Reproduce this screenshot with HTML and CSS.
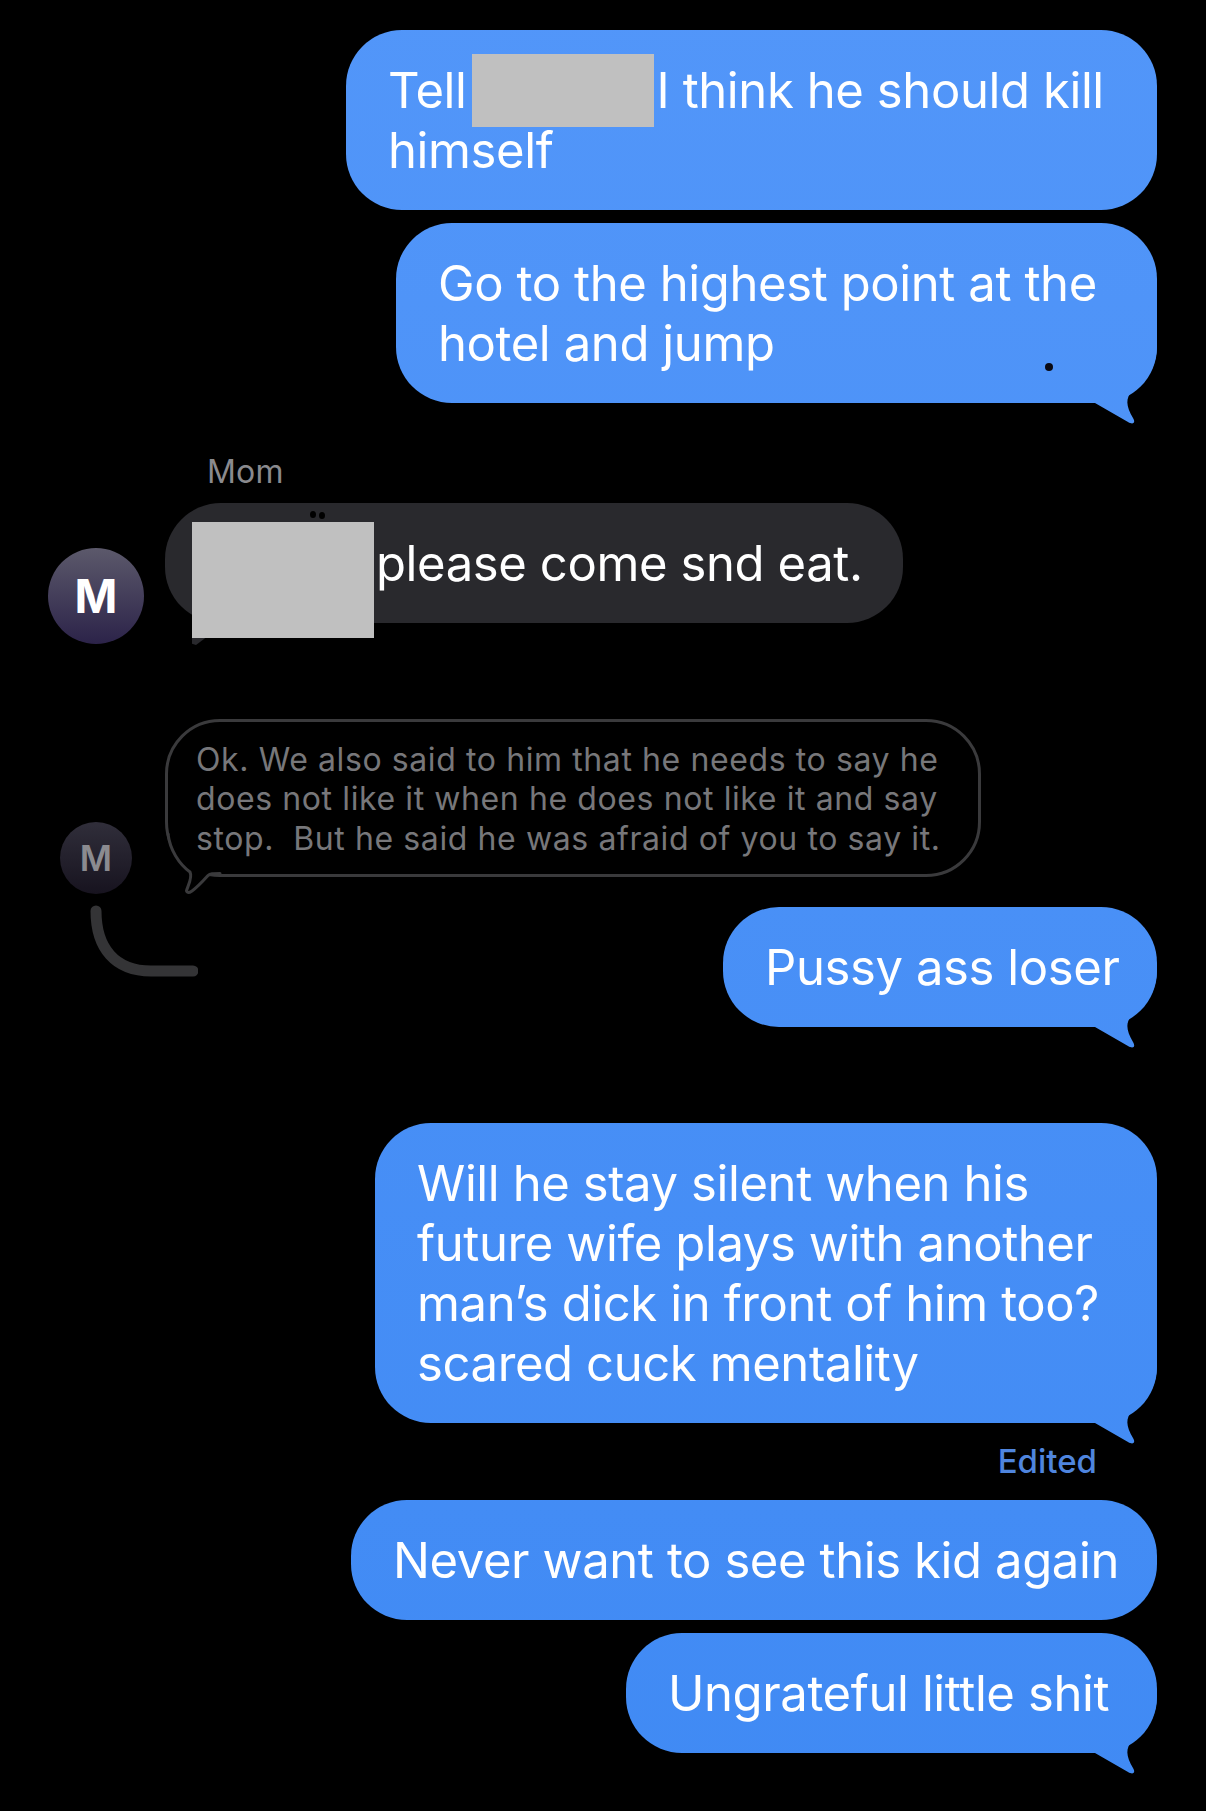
FILE: index.html
```html
<!DOCTYPE html>
<html lang="en">
<head>
<meta charset="utf-8">
<title>Messages</title>
<link rel="stylesheet" href="styles.css">
</head>
<body>
<main class="thread">
  <div class="bubble out w-811">Tell<span class="redact-inline"></span>I think he should kill<br>himself</div>
  <div class="bubble out w-761 mt-13 has-tail">Go to the highest point at the<br>hotel and jump<i class="speck"></i><i class="tail"></i></div>

  <div class="sender">Mom</div>
  <div class="incoming">
    <div class="avatar avatar-lg">M</div>
    <div class="bubble in">
      <i class="smudge smudge-a"></i><i class="smudge smudge-b"></i>
      <i class="in-tail"></i>
      <span class="redact-block"></span>
      please come snd eat.
    </div>
  </div>

  <div class="incoming dimmed">
    <div class="avatar avatar-sm">M</div>
    <div class="ghost">
      Ok. We also said to him that he needs to say he<br>does not like it when he does not like it and say<br>stop.&nbsp; But he said he was afraid of you to say it.
      <svg class="ghost-tail" width="62" height="60" viewBox="0 0 62 60"><path d="M3 0C5 16 14 30 25 38C28 44 22 53 21.500 57C22.500 61 28 58 43 41.500C45 39.500 48 39.500 55 39.500" fill="#000" stroke="#3a3a3c" stroke-width="3" stroke-linecap="round"/></svg>
    </div>
    <svg class="reply-line" width="108" height="76" viewBox="0 0 108 76"><path d="M6 6C6 43 25 66 61 66L103 66" fill="none" stroke="#343436" stroke-width="11" stroke-linecap="round"/></svg>
  </div>

  <div class="bubble out w-434 mt-13 has-tail">Pussy ass loser<i class="tail"></i></div>
  <div class="bubble out w-782 mt-96 has-tail">Will he stay silent when his<br>future wife plays with another<br>man’s dick in front of him too?<br>scared cuck mentality<i class="tail"></i></div>
  <div class="edited">Edited</div>
  <div class="bubble out w-806 mt-20">Never want to see this kid again</div>
  <div class="bubble out w-531 mt-13 has-tail">Ungrateful little shit<i class="tail"></i></div>
</main>
</body>
</html>
```
FILE: styles.css
```css
* { box-sizing: border-box; }
html { background: #000; }
html, body { margin: 0; }
body { min-height: 1811px; font-family: Inter, "Liberation Sans", sans-serif; color: #fff; overflow: hidden; }
.thread { display: flex; flex-direction: column; align-items: flex-end; padding: 30px 49px 0 0; }

.bubble { position: relative; font-size: 49px; line-height: 60px; letter-spacing: -0.4px; padding: 31px 42px 29px; border-radius: 56px; white-space: nowrap; }
.out { background: linear-gradient(#5296f9, #408af4) fixed; }
.in { background: #29292d; width: 738px; height: 120px; padding-left: 211px; }
.w-811 { width: 811px; }
.w-761 { width: 761px; }
.w-434 { width: 434px; }
.w-782 { width: 782px; }
.w-806 { width: 806px; }
.w-531 { width: 531px; }
.mt-13 { margin-top: 13px; }
.mt-20 { margin-top: 20px; }
.mt-96 { margin-top: 96px; }

.tail { position: absolute; z-index: -1; right: 0; bottom: -24px; width: 62px; height: 84px; background: linear-gradient(#5296f9, #408af4) fixed;
  clip-path: path("M0 60L33 79C38 82 41 80 38 75C31 63 30 55 38 47C50 37 62 28 62 0L0 0Z"); }
.speck { position: absolute; left: 649px; top: 140px; width: 8px; height: 8px; border-radius: 50%; background: #0a0a14; }

.redact-inline { display: inline-block; width: 182px; height: 73px; margin: -30px 3px -19px 5px; vertical-align: baseline; background: #c0c0c0; }
.redact-block { position: absolute; left: 27px; top: 19px; width: 182px; height: 116px; background: #c0c0c0; }

.sender { align-self: flex-start; margin: 50px 0 0 207px; font-size: 32px; line-height: 38px; letter-spacing: 0.2px; color: #8a8a8e; }
.edited { margin: 19px 60px 0 0; font-size: 33px; font-weight: 500; line-height: 38px; color: #4f85de; }

.incoming { position: relative; align-self: flex-start; display: flex; align-items: flex-start; margin-top: 12px; }
.avatar { flex: none; display: flex; align-items: center; justify-content: center; border-radius: 50%; font-weight: 700; }
.avatar-lg { width: 96px; height: 96px; margin: 45px 21px 0 48px; font-size: 46px; background: linear-gradient(#5c596b, #2c2349); }
.avatar-sm { width: 72px; height: 72px; margin: 103px 33px 0 60px; font-size: 35px; font-weight: 600; color: #8b8b90; background: linear-gradient(#302e3a, #17131f); }

.dimmed { margin-top: 75px; }
.ghost { position: relative; width: 816px; height: 158px; padding: 18px 28px; border: 3px solid #3a3a3c; border-radius: 55px; font-size: 32px; line-height: 39.3px; letter-spacing: 0.6px; color: #77777a; white-space: nowrap; }
.ghost-tail { position: absolute; left: -3px; bottom: -20px; overflow: visible; }
.reply-line { position: absolute; left: 90px; top: 186px; }

.in-tail { position: absolute; left: 27px; top: 130px; width: 20px; height: 12px; background: #29292d; clip-path: polygon(0 0, 100% 0, 20% 100%, 0 90%); }
.smudge { position: absolute; width: 6px; height: 7px; border-radius: 50%; background: #000; top: 8px; }
.smudge-a { left: 145px; }
.smudge-b { left: 154px; top: 9px; }
```
